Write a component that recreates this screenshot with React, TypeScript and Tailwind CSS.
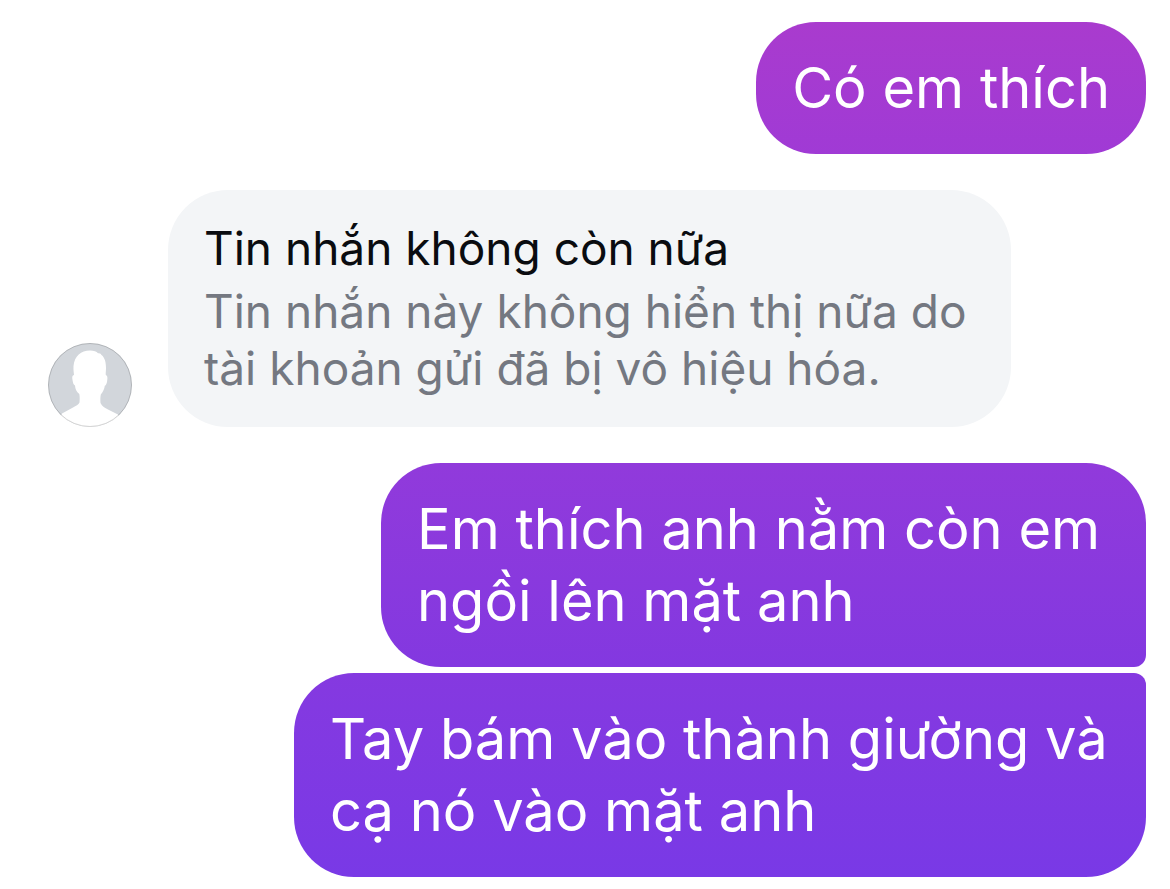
const sent = [
  {
    text: "Em thích anh nằm còn em ngồi lên mặt anh",
    className:
      "max-w-[765px] rounded-[60px] rounded-br-xl bg-linear-to-b from-[#913adb] to-[#8338e0]",
  },
  {
    text: "Tay bám vào thành giường và cạ nó vào mặt anh",
    className:
      "max-w-[852px] rounded-[60px] rounded-tr-xl bg-linear-to-b from-[#8539e0] to-[#7939e6]",
  },
];

function Avatar() {
  return (
    <svg
      viewBox="0 0 84 84"
      className="h-[84px] w-[84px] shrink-0"
      role="img"
      aria-label="Ảnh đại diện"
    >
      <defs>
        <clipPath id="avatar">
          <circle cx="42" cy="42" r="42" />
        </clipPath>
      </defs>
      <g clipPath="url(#avatar)">
        <rect width="84" height="84" fill="#d2d6db" />
        <path
          d="M42 7.5C46 7.5 48.500 8.500 50 10.300C52 9.800 53 11 53.500 12C57 14.500 58 20 58 25C58 28 57.500 30 57.800 32C60 33 59.500 36 59 39C58.500 41.500 57.500 42.500 56.800 42.800C56.500 46 55 49 52.800 51.500C52.300 54 52.300 57 52.500 60C54 63.500 57 65 60 66.500L70 71.500L76 84H8L14 70.500L25 64.500C28 62.800 30.500 62 31.500 59.500C31.800 56 31.800 54 31.300 51C28.500 49 27.200 46 27 42.500C25.500 42 25 40 24.500 37C24 34 24.200 32.500 26 32C25.800 29 25.300 27 25.500 23C26.500 13 33 7.500 42 7.500Z"
          fill="#fff"
        />
      </g>
      <circle cx="42" cy="42" r="41.500" fill="none" stroke="#000" strokeOpacity="0.16" />
    </svg>
  );
}

export default function App() {
  return (
    <main
      lang="vi"
      className="flex w-full flex-col gap-9 bg-white pt-[22px] pr-6 pb-3 pl-12 font-['Inter','Noto_Sans',sans-serif]"
    >
      <p className="max-w-full self-end rounded-[60px] bg-linear-to-b from-[#a93bce] to-[#a03ad5] px-9 py-[30px] text-[56px] leading-[72px] text-white">
        Có em thích
      </p>

      <div className="flex items-end gap-9">
        <Avatar />
        <div className="w-full max-w-[843px] rounded-[60px] bg-[#f3f5f7] px-9 py-[30px] text-[46px] leading-[57px]">
          <p className="mb-1.5 text-[#0a0c10]">Tin nhắn không còn nữa</p>
          <p className="text-[#747881]">
            Tin nhắn này không hiển thị nữa do tài khoản gửi đã bị vô hiệu hóa.
          </p>
        </div>
      </div>

      <div className="flex flex-col items-end gap-1.5 text-[56px] leading-[72px] text-white">
        {sent.map((m) => (
          <p key={m.text} className={`w-full px-9 py-[30px] ${m.className}`}>
            {m.text}
          </p>
        ))}
      </div>
    </main>
  );
}
